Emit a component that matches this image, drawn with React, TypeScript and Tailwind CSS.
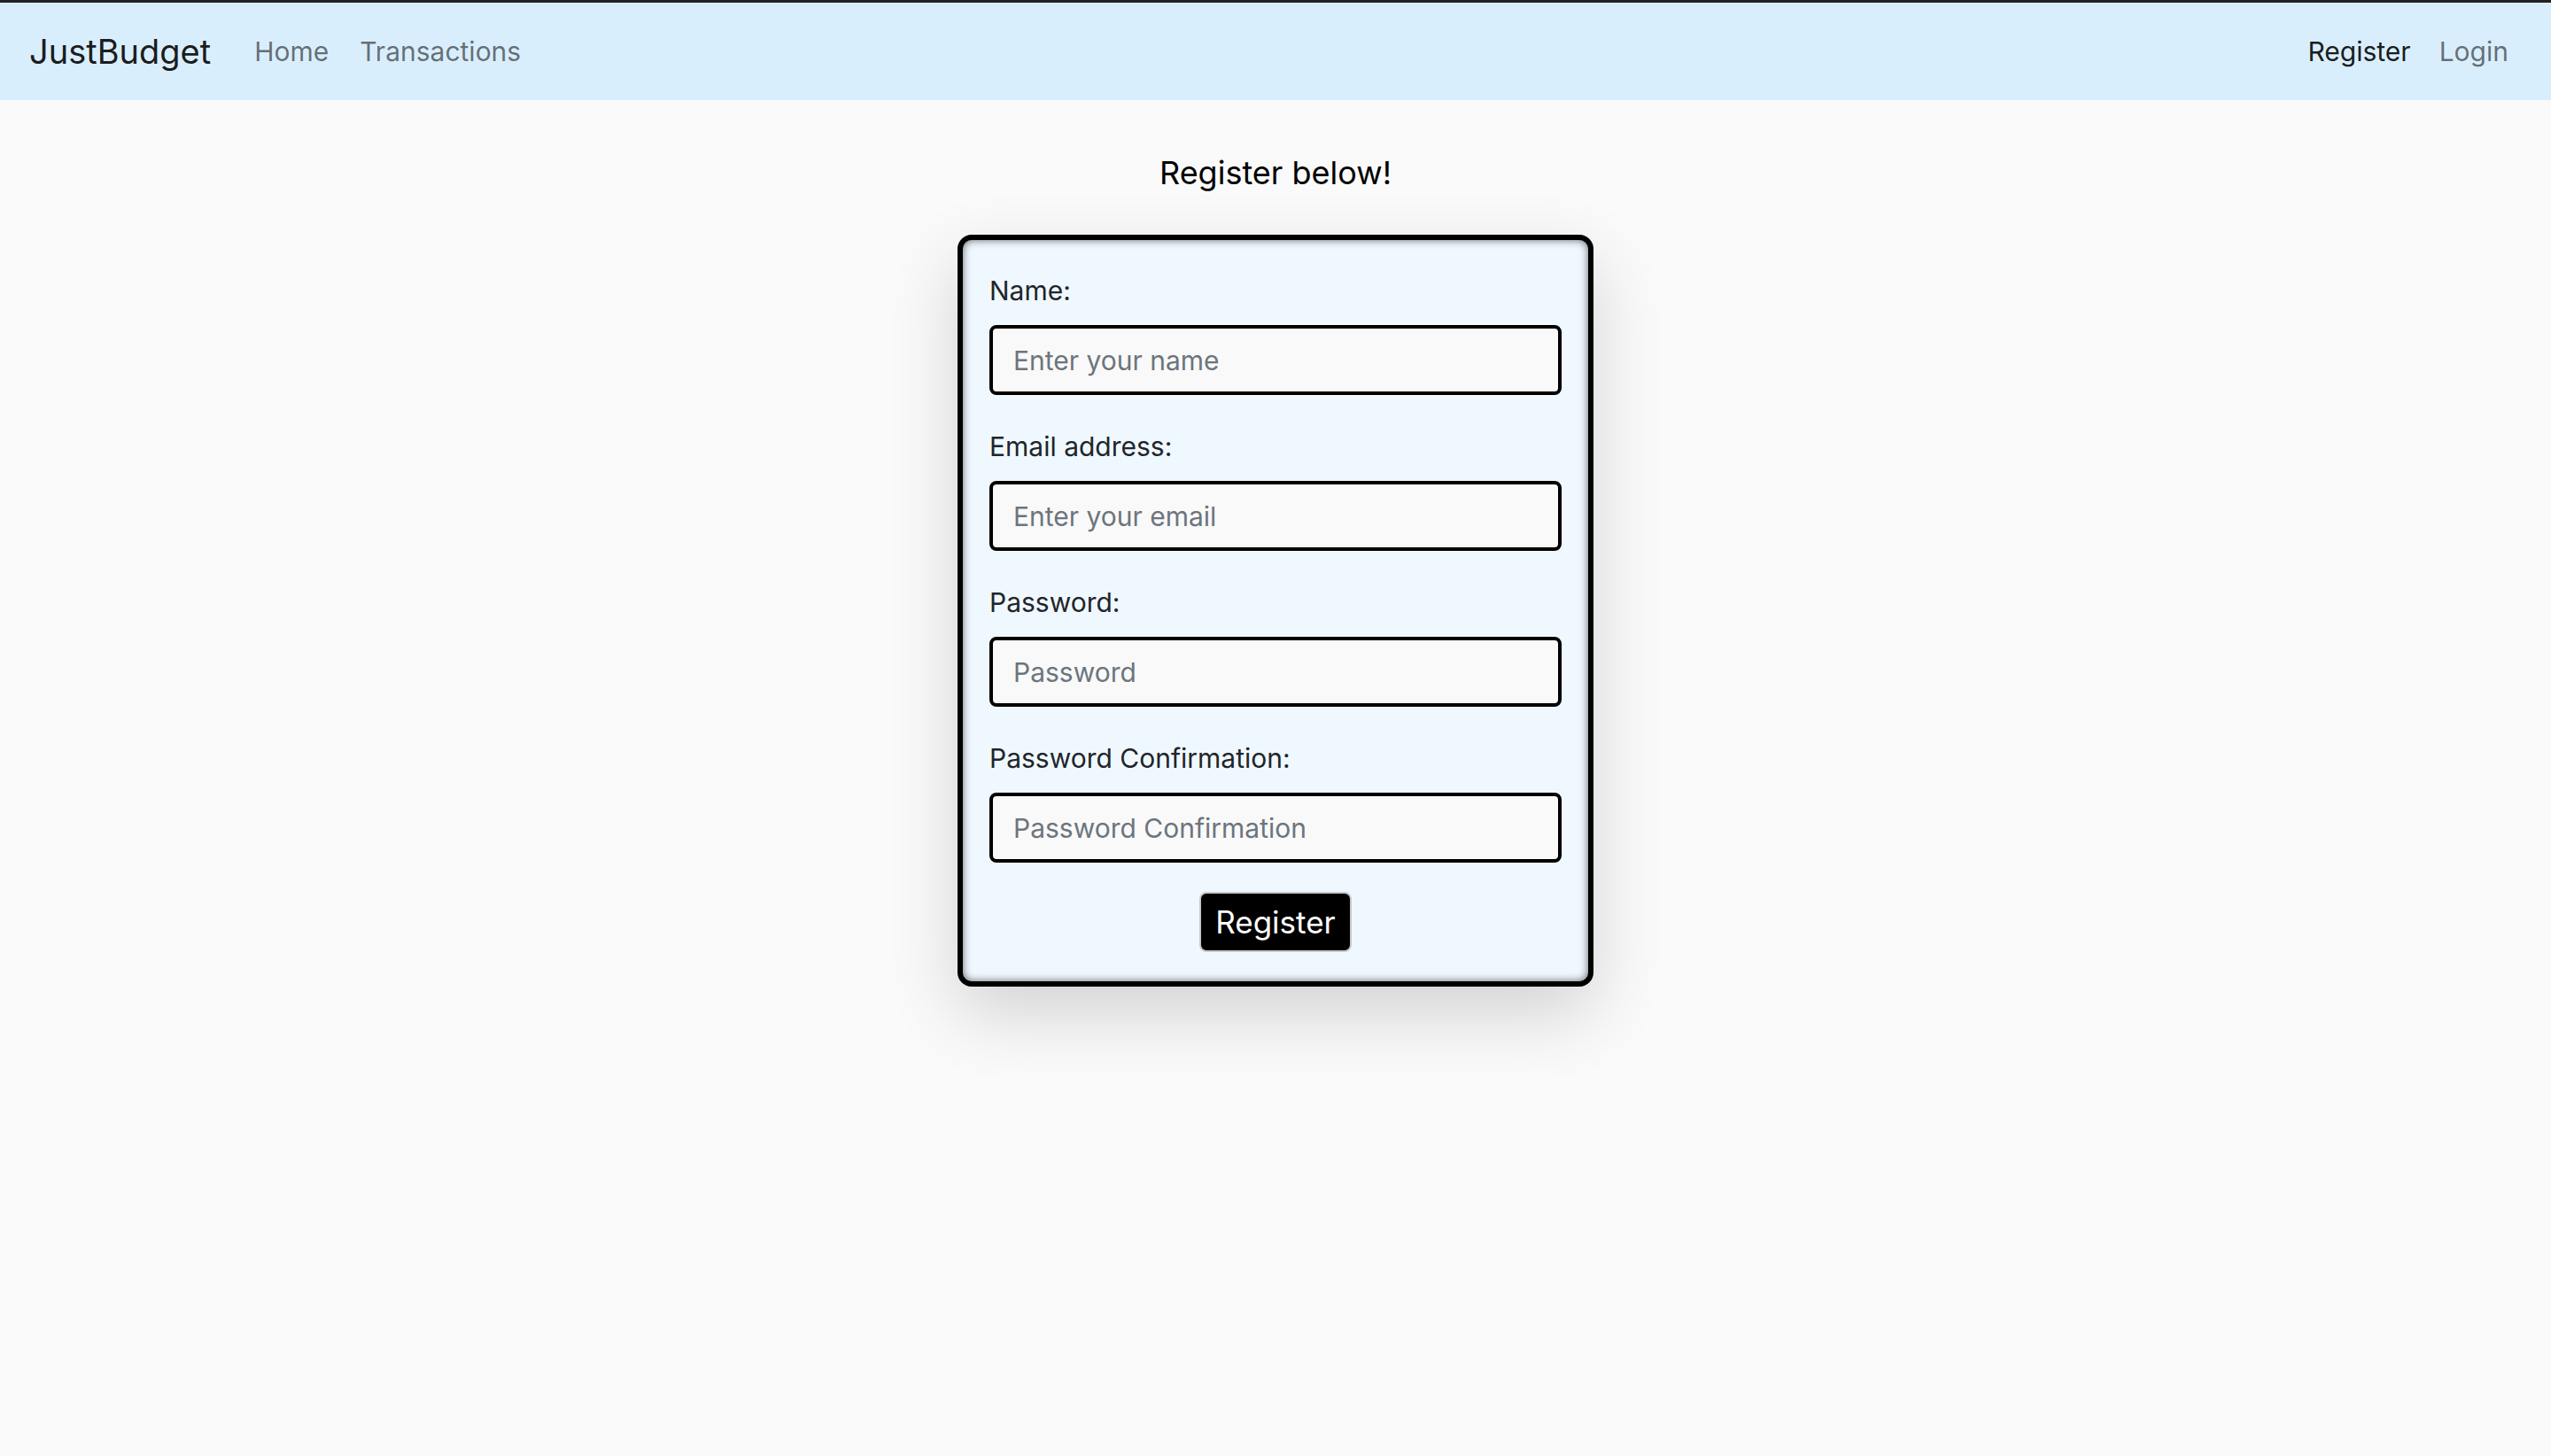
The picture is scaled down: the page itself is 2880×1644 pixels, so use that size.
export default function App() {
  const fields = [
    { label: "Name:", placeholder: "Enter your name", type: "text" },
    { label: "Email address:", placeholder: "Enter your email", type: "email" },
    { label: "Password:", placeholder: "Password", type: "password" },
    { label: "Password Confirmation:", placeholder: "Password Confirmation", type: "password" },
  ];
  return (
    <div className="min-h-screen border-t-[3px] border-[#222] bg-[#fafafa] font-['Inter',sans-serif]">
      <nav className="flex h-[110px] items-center bg-[#d9eefc] pl-[33px] pr-[48px]">
        <span className="mr-[49px] text-[38px] text-black/90">JustBudget</span>
        <div className="flex gap-[35px] text-[30px] text-black/55">
          <span>Home</span>
          <span>Transactions</span>
        </div>
        <div className="ml-auto flex gap-[32px] text-[30px]">
          <span className="text-black/90">Register</span>
          <span className="text-black/55">Login</span>
        </div>
      </nav>
      <h1 className="mt-[61px] text-center text-[36px] leading-[42px] text-black">Register below!</h1>
      <form className="mx-auto mt-[49px] flex w-[718px] flex-col rounded-[16px] border-[6px] border-black bg-[#f0f8ff] px-[30px] pb-[33px] pt-[35px] shadow-[inset_0_0_10px_rgba(0,0,0,0.6),0_30px_80px_rgba(0,0,0,0.16)]">
        {fields.map((f) => (
          <div key={f.label} className="mb-[36px] flex flex-col">
            <label className="mb-[16px] text-[30px] leading-[45px] text-[#212529]">{f.label}</label>
            <input
              type={f.type}
              placeholder={f.placeholder}
              className="h-[79px] rounded-[8px] border-[4px] border-black bg-[#f9f9f9] px-[23px] text-[30px] text-[#212529] outline-none placeholder:text-[#6c757d]"
            />
          </div>
        ))}
        <button
          type="button"
          className="mx-auto -mt-[3px] h-[68px] rounded-[8px] border-2 border-[#c8c8c8] bg-black px-[16px] text-[35px] leading-none text-white"
        >
          Register
        </button>
      </form>
    </div>
  );
}
